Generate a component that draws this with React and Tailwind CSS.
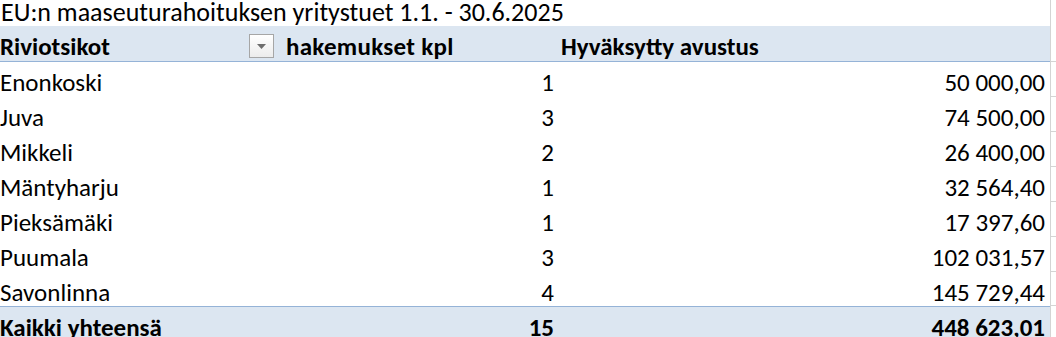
import React from "react";

const rows = [
  ["Enonkoski", "1", "50 000,00"],
  ["Juva", "3", "74 500,00"],
  ["Mikkeli", "2", "26 400,00"],
  ["Mäntyharju", "1", "32 564,40"],
  ["Pieksämäki", "1", "17 397,60"],
  ["Puumala", "3", "102 031,57"],
  ["Savonlinna", "4", "145 729,44"],
];

const font = { fontFamily: "Carlito, Calibri, Lato, 'Liberation Sans', sans-serif" };

export default function App() {
  return (
    <div className="w-[1056px] h-[337px] overflow-hidden bg-white text-black" style={font}>
      {/* title row */}
      <div className="flex h-[26px]">
        <div className="w-[1050px] pl-[1px] text-[26px] leading-[25px] whitespace-nowrap">
          EU:n maaseuturahoituksen yritystuet 1.1. - 30.6.2025
        </div>
        <div className="w-[6px] border-l border-[#d4d4d4]" />
      </div>
      {/* header */}
      <div className="flex h-[36px]">
        <div className="w-[1050px] grid grid-cols-[280px_280px_490px] bg-[#dce6f1] border-b border-[#95b3d7] text-[25px] leading-[25px] font-bold">
          <div className="flex items-start justify-between pr-[6px]">
            <span className="pt-[8px]">Riviotsikot</span>
            <span className="mt-[8px] w-[25px] h-[24px] border border-[#a6a6a6] bg-gradient-to-b from-white to-[#ececec] flex items-center justify-center">
              <svg width="9" height="5" viewBox="0 0 9 5"><path d="M0 0h9L4.5 5z" fill="#6d6d6d" /></svg>
            </span>
          </div>
          <div className="pt-[8px] pl-[6px] tracking-[0.3px]">hakemukset kpl</div>
          <div className="pt-[8px] pl-[1px]">Hyväksytty avustus</div>
        </div>
        <div className="w-[6px] border-l border-b border-[#d4d4d4]" />
      </div>
      {rows.map((r, i) => (
        <div key={r[0]} className={`flex ${i === rows.length - 1 ? "h-[34px]" : "h-[35px]"}`}>
          <div className="w-[1050px] grid grid-cols-[280px_280px_490px] text-[25px] leading-[25px] pt-[8px]">
            <div>{r[0]}</div>
            <div className="text-right pr-[6px]">{r[1]}</div>
            <div className="text-right pr-[5px]">{r[2]}</div>
          </div>
          <div className="w-[6px] border-l border-b border-[#d4d4d4]" />
        </div>
      ))}
      <div className="flex h-[36px]">
        <div className="w-[1050px] grid grid-cols-[280px_280px_490px] bg-[#dce6f1] border-t border-[#95b3d7] text-[25px] leading-[25px] font-bold pt-[8px]">
          <div>Kaikki yhteensä</div>
          <div className="text-right pr-[6px]">15</div>
          <div className="text-right pr-[5px]">448 623,01</div>
        </div>
        <div className="w-[6px] border-l border-[#d4d4d4]" />
      </div>
    </div>
  );
}
